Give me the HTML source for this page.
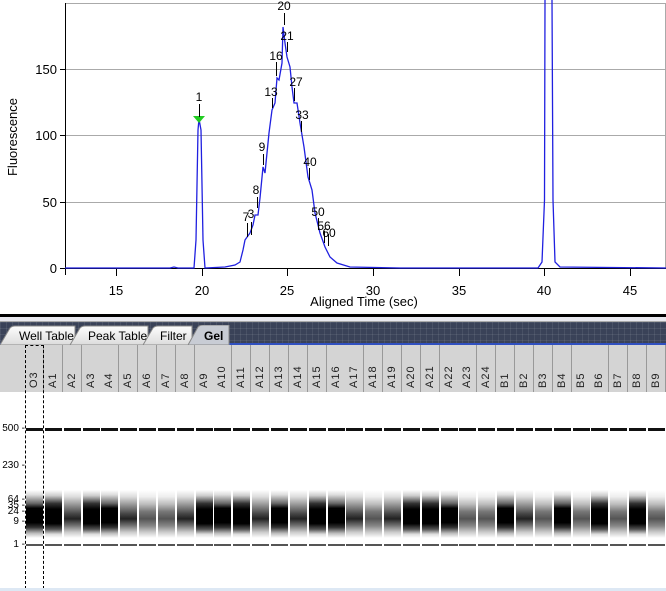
<!DOCTYPE html>
<html><head><meta charset="utf-8"><style>
*{margin:0;padding:0;box-sizing:border-box}
body{width:666px;height:591px;overflow:hidden;background:#fff;font-family:"Liberation Sans",sans-serif;position:relative}
.abs{position:absolute}
.lane{position:absolute;width:17px;top:392px;height:196px}
.b5{position:absolute;left:0;width:17px;top:36px;height:3px;background:#111}
.b1{position:absolute;left:0;width:17px;top:152px;height:2px;background:#555}
.sm{position:absolute;left:0;width:17px;top:98px;height:48px}
.s1{background:linear-gradient(#fff 0%,#ccc 12%,#333 28%,#000 40%,#000 70%,#555 82%,#ddd 92%,#fff)}
.s2{background:linear-gradient(#fff 0%,#ddd 14%,#999 30%,#444 50%,#222 60%,#777 75%,#ccc 88%,#fff)}
.s3{background:linear-gradient(#fff 0%,#eee 14%,#bbb 30%,#777 45%,#555 60%,#888 75%,#ccc 88%,#fff)}
.s4{background:linear-gradient(#fff 0%,#ddd 10%,#666 28%,#000 38%,#000 68%,#333 78%,#bbb 90%,#fff)}
.hd{position:absolute;top:345px;height:47px;width:19px;background:#d4d4d4;border-right:1px solid #999}
.hd span{position:absolute;left:3px;bottom:4px;transform-origin:left bottom;transform:rotate(-90deg) translate(0,12px);font-size:11px;color:#222;white-space:nowrap;letter-spacing:1px}
.lab{position:absolute;font-size:10px;color:#000;right:641px;white-space:nowrap;line-height:10px}
</style></head><body>
<svg class="abs" style="left:0;top:0" width="666" height="312" font-family="Liberation Sans, sans-serif" font-size="13">
<g stroke="#aaa" stroke-width="1">
<line x1="65" y1="3.5" x2="666" y2="3.5"/><line x1="65" y1="69.5" x2="666" y2="69.5"/><line x1="65" y1="135.5" x2="666" y2="135.5"/><line x1="65" y1="202.5" x2="666" y2="202.5"/><line x1="665.5" y1="3" x2="665.5" y2="268"/>
</g>
<g stroke="#000" stroke-width="1">
<line x1="65.5" y1="3" x2="65.5" y2="275"/><line x1="65" y1="268.5" x2="666" y2="268.5"/>
<line x1="60" y1="69.5" x2="65" y2="69.5"/><line x1="60" y1="135.5" x2="65" y2="135.5"/><line x1="60" y1="202.5" x2="65" y2="202.5"/><line x1="60" y1="268.5" x2="65" y2="268.5"/>
<line x1="116.5" y1="268" x2="116.5" y2="276"/><line x1="202.5" y1="268" x2="202.5" y2="276"/><line x1="287.5" y1="268" x2="287.5" y2="276"/><line x1="373.5" y1="268" x2="373.5" y2="276"/><line x1="459.5" y1="268" x2="459.5" y2="276"/><line x1="544.5" y1="268" x2="544.5" y2="276"/><line x1="630.5" y1="268" x2="630.5" y2="276"/>
</g>
<g fill="#000" text-anchor="end">
<text x="57" y="74">150</text><text x="57" y="140">100</text><text x="57" y="207">50</text><text x="57" y="273">0</text>
</g>
<g fill="#000" text-anchor="middle">
<text x="116" y="295">15</text><text x="202" y="295">20</text><text x="287" y="295">25</text><text x="373" y="295">30</text><text x="459" y="295">35</text><text x="544" y="295">40</text><text x="630" y="295">45</text>
<text x="364" y="306">Aligned Time (sec)</text>
<text transform="translate(17,137) rotate(-90)">Fluorescence</text>
</g>
<path fill="none" stroke="#2020e0" stroke-width="1.3" d="M65 268 L170 268 L174 267 L178 268 L194 268 L196 240 L198 130 L199 119 L201 130 L203 240 L205 268 L225 267 L235 265 L240 262 L243 250 L245 240 L250 233 L253 225 L255 215 L258 215 L260 198 L263 167 L265 173 L269 133 L272 110 L275 103 L277 78 L279 80 L282 63 L283 27 L285 43 L287 57 L290 67 L292 87 L294 103 L297 103 L300 123 L304 147 L308 177 L312 190 L315 213 L320 233 L325 247 L330 257 L337 263 L350 267 L400 268 L538 268 L542 262 L544.5 200 L545 0 M552 0 L553 200 L555 262 L560 267 L666 268"/>
<polygon points="193,116 205,116 199,123" fill="#22cc22"/>
<g stroke="#000" stroke-width="1">
<line x1="199.5" y1="104" x2="199.5" y2="117"/><line x1="284.5" y1="13" x2="284.5" y2="25"/><line x1="287.5" y1="42" x2="287.5" y2="52"/><line x1="276.5" y1="62" x2="276.5" y2="76"/><line x1="294.5" y1="88" x2="294.5" y2="101"/><line x1="272.5" y1="98" x2="272.5" y2="108"/><line x1="301.5" y1="121" x2="301.5" y2="132"/><line x1="263.5" y1="154" x2="263.5" y2="165"/><line x1="309.5" y1="168" x2="309.5" y2="180"/><line x1="257.5" y1="197" x2="257.5" y2="208"/><line x1="318.5" y1="218" x2="318.5" y2="230"/><line x1="247.5" y1="223" x2="247.5" y2="237"/><line x1="251.5" y1="222" x2="251.5" y2="235"/><line x1="324.5" y1="231" x2="324.5" y2="243"/><line x1="328.5" y1="234" x2="328.5" y2="246"/>
</g>
<g fill="#000" text-anchor="middle" font-size="12">
<text x="199" y="101">1</text><text x="284" y="10">20</text><text x="287" y="40">21</text><text x="276" y="60">16</text><text x="296" y="86">27</text><text x="271" y="96">13</text><text x="302" y="119">33</text><text x="262" y="151">9</text><text x="310" y="166">40</text><text x="256" y="194">8</text><text x="318" y="216">50</text><text x="246" y="221">7</text><text x="251" y="218">3</text><text x="324" y="230">56</text><text x="329" y="237">60</text>
</g>
</svg>
<div class="abs" style="left:0;top:314px;width:666px;height:3px;background:#000"></div>
<div class="abs" style="left:0;top:317px;width:666px;height:5px;background:#e8e8ee;border-bottom:1px solid #aaa"></div>
<div class="abs" style="left:0;top:322px;width:666px;height:23px;background:#3a4258;background-image:linear-gradient(90deg,rgba(255,255,255,.08) 1px,transparent 1px),linear-gradient(rgba(255,255,255,.08) 1px,transparent 1px);background-size:6px 6px;border-bottom:2px solid #3050c0"></div>
<svg class="abs" style="left:0;top:325px" width="240" height="20" font-family="Liberation Sans, sans-serif" font-size="12">
<defs><linearGradient id="tg" x1="0" y1="0" x2="0" y2="1"><stop offset="0" stop-color="#fdfdfd"/><stop offset="1" stop-color="#dcdcdc"/></linearGradient></defs>
<path d="M0 20 L10 3 Q12 1 15 1 L75 1 L75 20 Z" fill="url(#tg)" stroke="#888"/>
<path d="M70 20 L80 3 Q82 1 85 1 L148 1 L148 20 Z" fill="url(#tg)" stroke="#888"/>
<path d="M143 20 L153 3 Q155 1 158 1 L192 1 L192 20 Z" fill="url(#tg)" stroke="#888"/>
<path d="M188 20 L198 2 Q200 0 203 0 L229 0 L229 20 Z" fill="#c8ccd4" stroke="#888"/>
<text x="19" y="15" fill="#000">Well Table</text><text x="88" y="15" fill="#000">Peak Table</text><text x="160" y="15" fill="#000">Filter</text><text x="204" y="15" fill="#000" font-weight="bold">Gel</text>
</svg>
<div class="abs" style="left:0;top:345px;width:666px;height:47px;background:#d4d4d4"></div>
<div class="hd" style="left:25px"><span>O3</span></div><div class="hd" style="left:44px"><span>A1</span></div><div class="hd" style="left:63px"><span>A2</span></div><div class="hd" style="left:82px"><span>A3</span></div><div class="hd" style="left:100px"><span>A4</span></div><div class="hd" style="left:119px"><span>A5</span></div><div class="hd" style="left:138px"><span>A6</span></div><div class="hd" style="left:157px"><span>A7</span></div><div class="hd" style="left:176px"><span>A8</span></div><div class="hd" style="left:195px"><span>A9</span></div><div class="hd" style="left:213px"><span>A10</span></div><div class="hd" style="left:232px"><span>A11</span></div><div class="hd" style="left:251px"><span>A12</span></div><div class="hd" style="left:270px"><span>A13</span></div><div class="hd" style="left:289px"><span>A14</span></div><div class="hd" style="left:308px"><span>A15</span></div><div class="hd" style="left:327px"><span>A16</span></div><div class="hd" style="left:345px"><span>A17</span></div><div class="hd" style="left:364px"><span>A18</span></div><div class="hd" style="left:383px"><span>A19</span></div><div class="hd" style="left:402px"><span>A20</span></div><div class="hd" style="left:421px"><span>A21</span></div><div class="hd" style="left:440px"><span>A22</span></div><div class="hd" style="left:458px"><span>A23</span></div><div class="hd" style="left:477px"><span>A24</span></div><div class="hd" style="left:496px"><span>B1</span></div><div class="hd" style="left:515px"><span>B2</span></div><div class="hd" style="left:534px"><span>B3</span></div><div class="hd" style="left:553px"><span>B4</span></div><div class="hd" style="left:572px"><span>B5</span></div><div class="hd" style="left:590px"><span>B6</span></div><div class="hd" style="left:609px"><span>B7</span></div><div class="hd" style="left:628px"><span>B8</span></div><div class="hd" style="left:647px"><span>B9</span></div>

<div class="lane" style="left:26px"><div class="b5"></div><div class="sm s4"></div><div class="b1"></div></div>
<div class="lane" style="left:45px"><div class="b5"></div><div class="sm s1"></div><div class="b1"></div></div>
<div class="lane" style="left:64px"><div class="b5"></div><div class="sm s2"></div><div class="b1"></div></div>
<div class="lane" style="left:83px"><div class="b5"></div><div class="sm s1"></div><div class="b1"></div></div>
<div class="lane" style="left:101px"><div class="b5"></div><div class="sm s4"></div><div class="b1"></div></div>
<div class="lane" style="left:120px"><div class="b5"></div><div class="sm s2"></div><div class="b1"></div></div>
<div class="lane" style="left:139px"><div class="b5"></div><div class="sm s3"></div><div class="b1"></div></div>
<div class="lane" style="left:158px"><div class="b5"></div><div class="sm s3"></div><div class="b1"></div></div>
<div class="lane" style="left:177px"><div class="b5"></div><div class="sm s2"></div><div class="b1"></div></div>
<div class="lane" style="left:196px"><div class="b5"></div><div class="sm s1"></div><div class="b1"></div></div>
<div class="lane" style="left:214px"><div class="b5"></div><div class="sm s4"></div><div class="b1"></div></div>
<div class="lane" style="left:233px"><div class="b5"></div><div class="sm s1"></div><div class="b1"></div></div>
<div class="lane" style="left:252px"><div class="b5"></div><div class="sm s2"></div><div class="b1"></div></div>
<div class="lane" style="left:271px"><div class="b5"></div><div class="sm s4"></div><div class="b1"></div></div>
<div class="lane" style="left:290px"><div class="b5"></div><div class="sm s2"></div><div class="b1"></div></div>
<div class="lane" style="left:309px"><div class="b5"></div><div class="sm s1"></div><div class="b1"></div></div>
<div class="lane" style="left:328px"><div class="b5"></div><div class="sm s4"></div><div class="b1"></div></div>
<div class="lane" style="left:346px"><div class="b5"></div><div class="sm s2"></div><div class="b1"></div></div>
<div class="lane" style="left:365px"><div class="b5"></div><div class="sm s3"></div><div class="b1"></div></div>
<div class="lane" style="left:384px"><div class="b5"></div><div class="sm s2"></div><div class="b1"></div></div>
<div class="lane" style="left:403px"><div class="b5"></div><div class="sm s1"></div><div class="b1"></div></div>
<div class="lane" style="left:422px"><div class="b5"></div><div class="sm s1"></div><div class="b1"></div></div>
<div class="lane" style="left:441px"><div class="b5"></div><div class="sm s4"></div><div class="b1"></div></div>
<div class="lane" style="left:459px"><div class="b5"></div><div class="sm s3"></div><div class="b1"></div></div>
<div class="lane" style="left:478px"><div class="b5"></div><div class="sm s3"></div><div class="b1"></div></div>
<div class="lane" style="left:497px"><div class="b5"></div><div class="sm s4"></div><div class="b1"></div></div>
<div class="lane" style="left:516px"><div class="b5"></div><div class="sm s2"></div><div class="b1"></div></div>
<div class="lane" style="left:535px"><div class="b5"></div><div class="sm s3"></div><div class="b1"></div></div>
<div class="lane" style="left:554px"><div class="b5"></div><div class="sm s4"></div><div class="b1"></div></div>
<div class="lane" style="left:573px"><div class="b5"></div><div class="sm s3"></div><div class="b1"></div></div>
<div class="lane" style="left:591px"><div class="b5"></div><div class="sm s1"></div><div class="b1"></div></div>
<div class="lane" style="left:610px"><div class="b5"></div><div class="sm s3"></div><div class="b1"></div></div>
<div class="lane" style="left:629px"><div class="b5"></div><div class="sm s1"></div><div class="b1"></div></div>
<div class="lane" style="left:648px"><div class="b5"></div><div class="sm s3"></div><div class="b1"></div></div>

<div class="lab" style="top:424px">500 -</div>
<div class="lab" style="top:461px">230 -</div>
<div class="lab" style="top:495px">64 -</div>
<div class="lab" style="top:501px">35 -</div>
<div class="lab" style="top:507px">24 -</div>
<div class="lab" style="top:517px">9 -</div>
<div class="lab" style="top:540px">1 -</div>
<div class="abs" style="left:25px;top:345px;width:19px;height:244px;border:1px dashed #000"></div>
<div class="abs" style="left:0;top:588px;width:666px;height:3px;background:#dde8f4"></div>
</body></html>
